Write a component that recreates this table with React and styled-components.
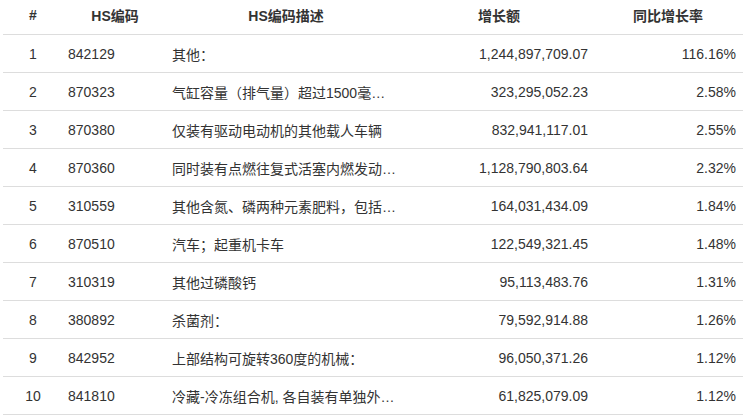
import React from 'react';
import styled, { createGlobalStyle } from 'styled-components';

const rows = [
  { code: '842129', desc: '其他：', amount: '1,244,897,709.07', rate: '116.16%' },
  { code: '870323', desc: '气缸容量（排气量）超过1500毫升，但不超过3000毫升的', amount: '323,295,052.23', rate: '2.58%' },
  { code: '870380', desc: '仅装有驱动电动机的其他载人车辆', amount: '832,941,117.01', rate: '2.55%' },
  { code: '870360', desc: '同时装有点燃往复式活塞内燃发动机及驱动电动机的', amount: '1,128,790,803.64', rate: '2.32%' },
  { code: '310559', desc: '其他含氮、磷两种元素肥料，包括硝酸盐及磷酸盐', amount: '164,031,434.09', rate: '1.84%' },
  { code: '870510', desc: '汽车；起重机卡车', amount: '122,549,321.45', rate: '1.48%' },
  { code: '310319', desc: '其他过磷酸钙', amount: '95,113,483.76', rate: '1.31%' },
  { code: '380892', desc: '杀菌剂：', amount: '79,592,914.88', rate: '1.26%' },
  { code: '842952', desc: '上部结构可旋转360度的机械：', amount: '96,050,371.26', rate: '1.12%' },
  { code: '841810', desc: '冷藏-冷冻组合机, 各自装有单独外门或抽屉', amount: '61,825,079.09', rate: '1.12%' },
];

const marks = [
  { left: -30, top: 128 },
  { left: 190, top: 140 },
  { left: 195, top: 322 },
  { left: -30, top: 308 },
];

const App = () => (
  <Page>
    <GlobalStyle />
    <Table>
      <colgroup>
        <col style={{ width: 60 }} />
        <col style={{ width: 104 }} />
        <col style={{ width: 238 }} />
        <col style={{ width: 188 }} />
        <col style={{ width: 150 }} />
      </colgroup>
      <thead>
        <tr>
          <Th>#</Th>
          <Th>HS编码</Th>
          <Th>HS编码描述</Th>
          <Th>增长额</Th>
          <Th>同比增长率</Th>
        </tr>
      </thead>
      <tbody>
        {rows.map((r, i) => (
          <tr key={r.code}>
            <Td $align="center">{i + 1}</Td>
            <Td>{r.code}</Td>
            <Td $clip>{r.desc}</Td>
            <Td $align="right">{r.amount}</Td>
            <Td $align="right" $end>{r.rate}</Td>
          </tr>
        ))}
      </tbody>
    </Table>
    {marks.map((m, i) => (
      <Watermark key={i} style={{ left: m.left, top: m.top }}>TOPEASE</Watermark>
    ))}
  </Page>
);

const GlobalStyle = createGlobalStyle`
  body {
    margin: 0;
    background: #fff;
    font-family: "Liberation Sans", Arial, "Noto Sans CJK SC", sans-serif;
  }
`;

const Page = styled.div`
  position: relative;
  width: 752px;
  height: 418px;
  padding: 0 3px;
  box-sizing: border-box;
  overflow: hidden;
`;

const Table = styled.table`
  width: 740px;
  table-layout: fixed;
  border-collapse: collapse;
  font-size: 14px;
  color: #333;
`;

const Th = styled.th`
  height: 30px;
  padding: 0 5px 4px;
  text-align: center;
  font-weight: bold;
  color: #333;
  border-bottom: 1px solid #ddd;
`;

const Td = styled.td`
  height: 37px;
  padding: 0 ${(p) => (p.$clip ? 9 : p.$end ? 7 : 5)}px 0 5px;
  text-align: ${(p) => p.$align || 'left'};
  border-bottom: 1px solid #ddd;
  white-space: nowrap;
  overflow: ${(p) => (p.$clip ? 'hidden' : 'visible')};
  text-overflow: ${(p) => (p.$clip ? 'ellipsis' : 'clip')};
`;

const Watermark = styled.div`
  position: absolute;
  font-size: 22px;
  font-weight: bold;
  letter-spacing: 2px;
  color: rgba(0, 0, 0, 0.025);
  transform: rotate(-25deg);
  pointer-events: none;
`;

export default App;
